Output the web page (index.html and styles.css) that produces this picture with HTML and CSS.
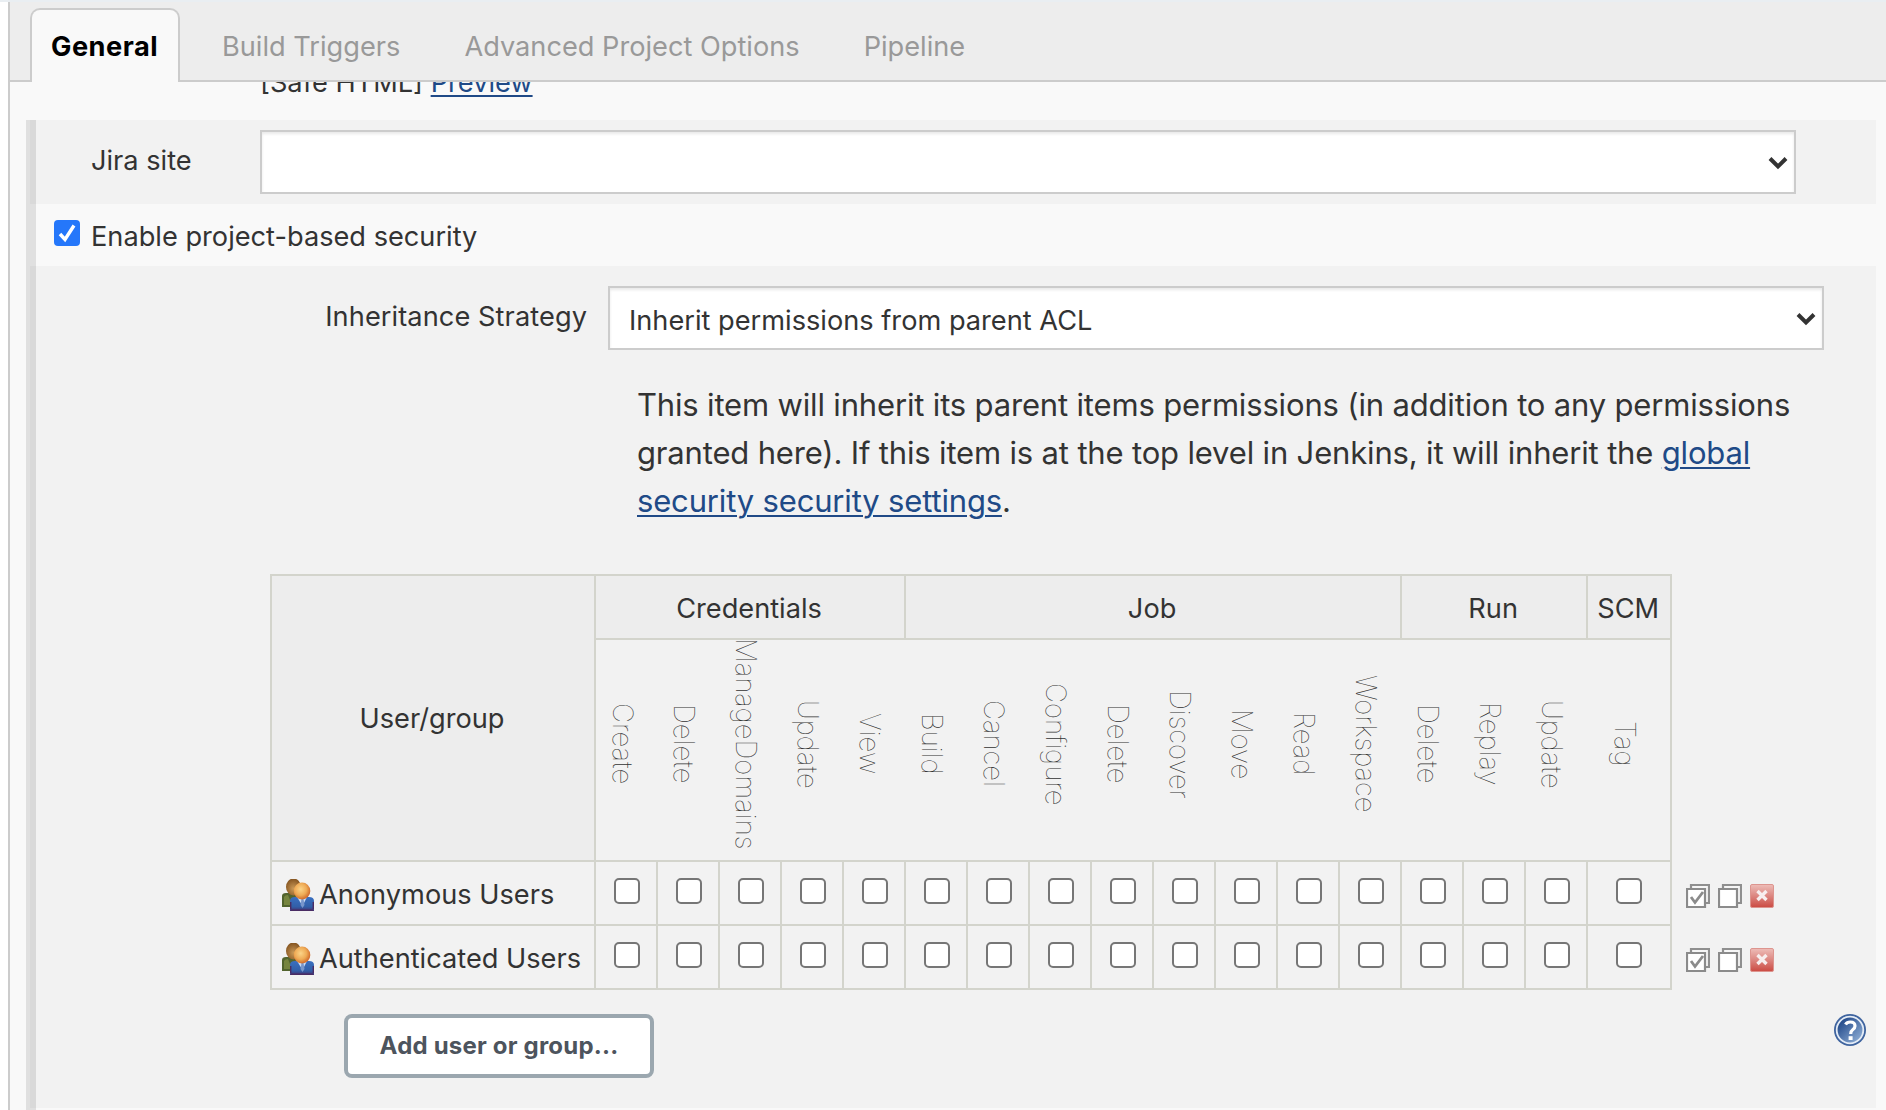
FILE: index.html
```html
<!DOCTYPE html>
<html lang="en">
<head>
<meta charset="utf-8">
<title>Project configuration</title>
<link rel="stylesheet" href="styles.css">
</head>
<body>
<svg class="defs" width="0" height="0" aria-hidden="true">
  <defs>
    <linearGradient id="red" x1="0" y1="0" x2="0" y2="1"><stop offset="0" stop-color="#eebdb8"/><stop offset=".5" stop-color="#dc8680"/><stop offset="1" stop-color="#cb4a42"/></linearGradient>
    <linearGradient id="blue" x1="0" y1="0" x2="1" y2="1"><stop offset=".2" stop-color="#29508f"/><stop offset="1" stop-color="#9dbbdf"/></linearGradient>
    <radialGradient id="face" cx=".42" cy=".4" r=".6"><stop offset="0" stop-color="#fbd488"/><stop offset=".6" stop-color="#eeaa55"/><stop offset="1" stop-color="#cf6a2b"/></radialGradient>
    <radialGradient id="back" cx=".5" cy=".6" r=".6"><stop offset="0" stop-color="#cb9a58"/><stop offset="1" stop-color="#83531f"/></radialGradient>
    <linearGradient id="shirt" x1="0" y1="0" x2="0" y2="1"><stop offset="0" stop-color="#3a6fc0"/><stop offset=".7" stop-color="#315fa8"/><stop offset="1" stop-color="#47306e"/></linearGradient>
    <symbol id="users" viewBox="0 0 32 32">
      <path d="M0 28V17q0-3 4-3h10v14z" fill="#52642e"/><path d="M2 26v-8q1-2 4-2l4 10z" fill="#76853f"/>
      <ellipse cx="11.5" cy="8" rx="7.5" ry="8.5" fill="url(#back)"/>
      <path d="M8 32V22q0-4 5-4h14q5 0 5 4v10z" fill="url(#shirt)"/>
      <path d="M9 31.3h22M8.700 30v-7M31.300 30v-7" stroke="#4a2c63" stroke-width="1.4"/>
      <path d="M15 18h10l-4.5 9z" fill="#c9daf2"/><path d="M19.500 20h2l1 6-2 3-2-3z" fill="#7896cc"/>
      <ellipse cx="20" cy="12" rx="8.3" ry="8.5" fill="url(#face)"/>
    </symbol>
    <symbol id="check-all" viewBox="0 0 24 24">
      <path d="M5 5V1h18v18h-4" fill="#f6f6f6" stroke="#8f8f8f" stroke-width="2.200"/>
      <path d="M1 5h18v18H1z" fill="#fff" stroke="#8b8b8b" stroke-width="2.200"/>
      <path d="M5 13l4 5.500 8-10.500" fill="none" stroke="#8b8b8b" stroke-width="2.800"/>
    </symbol>
    <symbol id="check-none" viewBox="0 0 24 24">
      <path d="M5 5V1h18v18h-4" fill="#f6f6f6" stroke="#8f8f8f" stroke-width="2.200"/>
      <path d="M1 5h18v18H1z" fill="#fff" stroke="#8b8b8b" stroke-width="2.200"/>
    </symbol>
    <symbol id="remove" viewBox="0 0 24 24">
      <rect x=".5" y=".5" width="23" height="23" rx="1.500" fill="url(#red)" stroke="#dd958f"/>
      <path d="M7.500 7l9 9m0-9l-9 9" stroke="#f7eeee" stroke-width="3.400"/>
    </symbol>
    <symbol id="chevron" viewBox="0 0 20 14"><path d="M2 2.500l8 8 8-8" fill="none" stroke="#333" stroke-width="4"/></symbol>
  </defs>
</svg>
<div class="page">
  <nav class="tabs">
    <a class="tab active">General</a>
    <a class="tab">Build Triggers</a>
    <a class="tab">Advanced Project Options</a>
    <a class="tab">Pipeline</a>
  </nav>
  <main class="config">
    <div class="markup"><p class="markup-text">[Safe HTML] <a class="link">Preview</a></p></div>
    <div class="section">
      <div class="jira">
        <label class="jira-label">Jira site</label>
        <div class="select"><span></span><svg class="chevron"><use href="#chevron"/></svg></div>
      </div>
      <label class="enable">
        <span class="checkbox checked"><svg viewBox="0 0 26 26"><path d="M6 14l5 5.500 9-14" fill="none" stroke="#fff" stroke-width="3.400"/></svg></span>
        <span class="enable-text">Enable project-based security</span>
      </label>
      <div class="security">
        <div class="strategy">
          <label class="strategy-label">Inheritance Strategy</label>
          <div class="select"><span class="select-text">Inherit permissions from parent ACL</span><svg class="chevron"><use href="#chevron"/></svg></div>
        </div>
        <p class="description">This item will inherit its parent items permissions (in addition to any permissions<br>granted here). If this item is at the top level in Jenkins, it will inherit the <a class="link">global</a><br><a class="link">security security settings</a>.</p>
        <table class="matrix">
          <colgroup><col class="c-user"><col span="16" class="c-perm"><col class="c-scm"><col class="c-actions"></colgroup>
          <tr class="groups"><th rowspan="2" class="head">User/group</th><th colspan="5" class="head group">Credentials</th><th colspan="8" class="head group">Job</th><th colspan="3" class="head group">Run</th><th class="head group">SCM</th><td class="actions"></td></tr>
          <tr class="perms"><th><span>Create</span></th><th><span>Delete</span></th><th><span>ManageDomains</span></th><th><span>Update</span></th><th><span>View</span></th><th><span>Build</span></th><th><span>Cancel</span></th><th><span>Configure</span></th><th><span>Delete</span></th><th><span>Discover</span></th><th><span>Move</span></th><th><span>Read</span></th><th><span>Workspace</span></th><th><span>Delete</span></th><th><span>Replay</span></th><th><span>Update</span></th><th><span>Tag</span></th><td class="actions"></td></tr>
          <tr class="user"><td><div class="name"><svg><use href="#users"/></svg><span>Anonymous Users</span></div></td><td><i class="checkbox"></i></td><td><i class="checkbox"></i></td><td><i class="checkbox"></i></td><td><i class="checkbox"></i></td><td><i class="checkbox"></i></td><td><i class="checkbox"></i></td><td><i class="checkbox"></i></td><td><i class="checkbox"></i></td><td><i class="checkbox"></i></td><td><i class="checkbox"></i></td><td><i class="checkbox"></i></td><td><i class="checkbox"></i></td><td><i class="checkbox"></i></td><td><i class="checkbox"></i></td><td><i class="checkbox"></i></td><td><i class="checkbox"></i></td><td><i class="checkbox"></i></td><td class="actions"><div class="icons"><svg><use href="#check-all"/></svg><svg><use href="#check-none"/></svg><svg><use href="#remove"/></svg></div></td></tr>
          <tr class="user"><td><div class="name"><svg><use href="#users"/></svg><span>Authenticated Users</span></div></td><td><i class="checkbox"></i></td><td><i class="checkbox"></i></td><td><i class="checkbox"></i></td><td><i class="checkbox"></i></td><td><i class="checkbox"></i></td><td><i class="checkbox"></i></td><td><i class="checkbox"></i></td><td><i class="checkbox"></i></td><td><i class="checkbox"></i></td><td><i class="checkbox"></i></td><td><i class="checkbox"></i></td><td><i class="checkbox"></i></td><td><i class="checkbox"></i></td><td><i class="checkbox"></i></td><td><i class="checkbox"></i></td><td><i class="checkbox"></i></td><td><i class="checkbox"></i></td><td class="actions"><div class="icons"><svg><use href="#check-all"/></svg><svg><use href="#check-none"/></svg><svg><use href="#remove"/></svg></div></td></tr>
        </table>
        <div class="footer">
          <button class="add">Add user or group...</button>
          <svg class="help" viewBox="0 0 32 32">
            <circle cx="16" cy="16" r="16" fill="#3f649f"/><circle cx="16" cy="16" r="13.300" fill="url(#blue)" stroke="#e4ecf6" stroke-width="1.800"/>
            <path d="M11.500 10.500Q13 8 16.200 8q4.800 0 4.800 4 0 2.200-2.300 3.800-2 1.400-2 4.200" fill="none" stroke="#fff" stroke-width="3.200"/><rect x="14.600" y="22.200" width="4" height="3.800" fill="#fff"/>
          </svg>
        </div>
      </div>
    </div>
  </main>
</div>
</body>
</html>
```
FILE: styles.css
```css
* { box-sizing: border-box; }
body { margin: 0; height: 1110px; overflow: hidden; background: #fff; border-top: 2px solid #e9eef2; font: 27.2px/34px Inter, "Liberation Sans", sans-serif; color: #333; }
.defs { position: absolute; }
.page { margin-left: 8px; height: 1108px; border-left: 2px solid #ccc; background: #f9f9f9; overflow: hidden; }
.link { color: #204a87; text-decoration: underline; text-decoration-thickness: 2px; text-underline-offset: 3px; }

.tabs { display: flex; align-items: flex-end; gap: 24px; height: 80px; padding-left: 20px; background: #ededed; border-bottom: 2px solid #ccc; }
.tab { height: 74px; margin-bottom: -2px; padding: 20px 18px 0; border: 2px solid transparent; border-bottom: 0; color: #999; white-space: nowrap; }
.tab.active { width: 150px; margin-right: -2px; padding-left: 19px; padding-right: 0; background: #f9f9f9; border-color: #ccc; border-radius: 10px 10px 0 0; color: #000; font-weight: 700; letter-spacing: .5px; }

.config { padding: 0 10px 0 16px; }
.markup { height: 38px; overflow: hidden; padding-left: 234px; }
.markup-text { margin: -16px 0 0; }
.section { height: 990px; border-left: 10px solid #e0e0e0; }
.jira { display: flex; height: 84px; margin-left: -6px; padding: 10px 80px 10px 0; background: #f2f2f2; border-left: 6px solid #d9d9d9; }
.jira-label { width: 224px; padding: 14px 0 0 55px; }
.select { flex: 1; display: flex; align-items: center; justify-content: space-between; height: 64px; padding: 0 6px 0 19px; background: #fff; border: 2px solid #ccc; box-shadow: inset 0 2px 3px rgba(0, 0, 0, .09); }
.select-text { padding-top: 6px; }
.chevron { width: 20px; height: 14px; margin-top: 1px; }
.enable { display: flex; height: 62px; padding: 16px 0 0 18px; }
.enable-text { margin: 0 0 0 11px; }
.checkbox { display: block; width: 26px; height: 26px; border: 2px solid #767676; border-radius: 5px; background: #fff; }
.checkbox.checked { border: 0; border-radius: 4px; background: #2577fa; }
.checkbox svg { display: block; width: 26px; height: 26px; }

.security { height: 842px; margin-left: -6px; padding-top: 20px; background: #f2f2f2; border-left: 6px solid #d9d9d9; }
.strategy { display: flex; padding-right: 52px; }
.strategy-label { width: 572px; padding: 14px 21px 0 0; text-align: right; letter-spacing: .08px; }
.description { margin: 31px 0 49px 601px; font-size: 31px; line-height: 48px; letter-spacing: -.165px; white-space: nowrap; }

.matrix { width: 1506px; margin-left: 234px; border-collapse: collapse; table-layout: fixed; }
.c-user { width: 324px; }
.c-perm { width: 62px; }
.c-scm { width: 84px; }
.c-actions { width: 105px; }
.matrix th, .matrix td { padding: 0; border: 2px solid #d3d4cc; font-weight: 400; }
.matrix .actions { border-width: 0 0 0 2px; }
.matrix .head { background: #ededed; padding: 2px 2px 0 0; }
.matrix .group { padding-top: 4px; }
.groups { height: 64px; }
.perms { height: 222px; }
.matrix .perms th { border-left: 0; border-right: 0; font-weight: 100; }
.matrix .perms th:nth-last-child(2) { border-right: 2px solid #d3d4cc; }
.perms span { display: block; margin: -12px auto 0; width: 42px; padding-right: 8px; font-size: 27.6px; writing-mode: vertical-rl; text-align: center; }
.user { height: 64px; }
.matrix .user td:not(:first-child):not(:nth-last-child(2)):not(.actions) { padding-left: 2px; }
.user .checkbox { margin: -4px auto 0; }
.name { display: flex; align-items: center; gap: 5px; padding: 4px 0 0 10px; white-space: nowrap; }
.name svg { width: 32px; height: 32px; }
.icons { display: flex; gap: 8px; padding: 6px 0 0 14px; }
.icons svg { width: 24px; height: 24px; }

.footer { display: flex; justify-content: space-between; padding: 24px 10px 0 308px; }
.add { width: 310px; height: 64px; padding: 0; border: 4px solid #9ba7af; border-radius: 8px; background: #fff; color: #4d545d; font: 700 24px/34px Inter, "Liberation Sans", sans-serif; letter-spacing: .2px; }
.help { width: 32px; height: 32px; }
```
